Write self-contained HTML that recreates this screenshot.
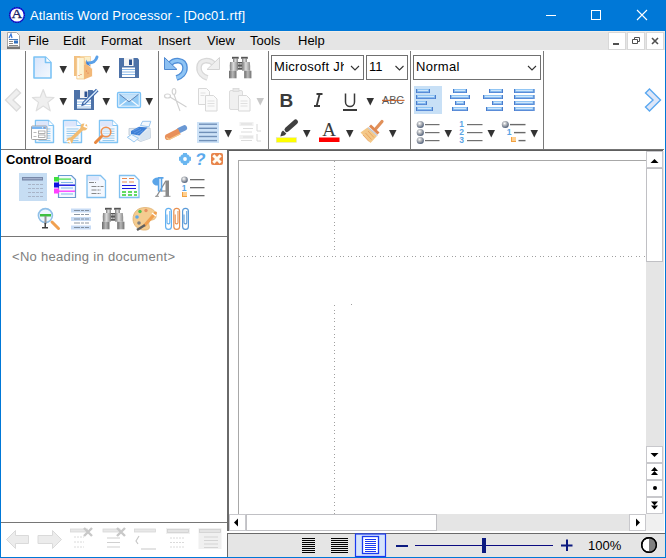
<!DOCTYPE html>
<html><head><meta charset="utf-8">
<style>
*{margin:0;padding:0;box-sizing:border-box}
html,body{width:666px;height:558px;overflow:hidden;background:#fff;font-family:"Liberation Sans",sans-serif}
.a{position:absolute}
.t{position:absolute;white-space:nowrap;line-height:1}
svg{position:absolute;left:0;top:0;overflow:visible}
</style></head><body>

<div class="a" style="left:0;top:0;width:666px;height:31px;background:#0078d7"></div>
<div class="a" style="left:1px;top:31px;width:664px;height:1px;background:#f1eee9"></div>
<div class="a" style="left:1px;top:32px;width:664px;height:18px;background:#e5e5e5"></div>
<div class="t" style="left:30px;top:9px;font-size:13px;color:#fff;letter-spacing:0.12px">Atlantis Word Processor - [Doc01.rtf]</div>
<div class="t" style="left:28px;top:34px;font-size:13px;color:#000">File</div>
<div class="t" style="left:63px;top:34px;font-size:13px;color:#000">Edit</div>
<div class="t" style="left:101px;top:34px;font-size:13px;color:#000">Format</div>
<div class="t" style="left:158px;top:34px;font-size:13px;color:#000">Insert</div>
<div class="t" style="left:207px;top:34px;font-size:13px;color:#000">View</div>
<div class="t" style="left:250px;top:34px;font-size:13px;color:#000">Tools</div>
<div class="t" style="left:298px;top:34px;font-size:13px;color:#000">Help</div>
<div class="a" style="left:608px;top:32px;width:18px;height:18px;background:#fff;border:1px solid #d8d8d8"></div>
<div class="a" style="left:627px;top:32px;width:18px;height:18px;background:#fff;border:1px solid #d8d8d8"></div>
<div class="a" style="left:646px;top:32px;width:18px;height:18px;background:#fff;border:1px solid #d8d8d8"></div>
<!-- combos -->
<div class="a" style="left:271px;top:55px;width:93px;height:25px;border:1px solid #707070;background:#fff"></div>
<div class="a" style="left:366px;top:55px;width:42px;height:25px;border:1px solid #707070;background:#fff"></div>
<div class="a" style="left:413px;top:55px;width:128px;height:25px;border:1px solid #707070;background:#fff"></div>
<div class="a" style="left:274px;top:58px;width:70px;height:16px;overflow:hidden"><div class="t" style="left:0;top:2px;font-size:13px;color:#000;letter-spacing:0.3px">Microsoft JhengHei</div></div>
<div class="t" style="left:369px;top:60px;font-size:13px;color:#000">11</div>
<div class="t" style="left:416px;top:60px;font-size:13px;color:#000;letter-spacing:0.3px">Normal</div>
<!-- control board text -->
<div class="t" style="left:6px;top:153px;font-size:13px;font-weight:bold;color:#000;letter-spacing:-0.15px">Control Board</div>
<div class="t" style="left:12px;top:250px;font-size:13px;color:#808080;letter-spacing:0.3px">&lt;No heading in document&gt;</div>
<!-- doc/scrollbars/status -->
<div class="a" style="left:646px;top:151px;width:18px;height:363px;background:#e5e5e5"></div>
<div class="a" style="left:229px;top:514px;width:435px;height:17px;background:#e5e5e5"></div>
<div class="a" style="left:646px;top:514px;width:18px;height:17px;background:#f0f0f0"></div>
<div class="a" style="left:227px;top:533px;width:438px;height:24px;background:#e5e5e5"></div>
<div class="t" style="left:588px;top:539px;font-size:13px;color:#000">100%</div>
<svg width="666" height="558" viewBox="0 0 666 558">
<defs>
<linearGradient id="gdoc" x1="0" y1="0" x2="1" y2="1"><stop offset="0" stop-color="#d6e4fb"/><stop offset="1" stop-color="#f4f9fe"/></linearGradient>
<radialGradient id="gball" cx="0.4" cy="0.35" r="0.65"><stop offset="0" stop-color="#ffffff"/><stop offset="0.5" stop-color="#a8acb2"/><stop offset="1" stop-color="#50607a"/></radialGradient>
<linearGradient id="gbin" x1="0" y1="0" x2="1" y2="0"><stop offset="0" stop-color="#7a7a7a"/><stop offset="0.45" stop-color="#dcdcdc"/><stop offset="1" stop-color="#8a8a8a"/></linearGradient><linearGradient id="gbin2" x1="0" y1="0" x2="1" y2="0"><stop offset="0" stop-color="#6a6a6a"/><stop offset="0.5" stop-color="#b8b8b8"/><stop offset="1" stop-color="#707070"/></linearGradient>
</defs>
<rect x="0" y="0" width="1" height="558" fill="#0078d7"/><rect x="665" y="0" width="1" height="558" fill="#0078d7"/><rect x="0" y="557" width="666" height="1" fill="#0078d7"/>
<circle cx="17" cy="15" r="7.3" fill="#fff" stroke="#1818e0" stroke-width="1.4"/><circle cx="17" cy="15" r="7.6" fill="none" stroke="#101060" stroke-width="0.8" stroke-dasharray="1 1.5"/>
<text x="17" y="18.2" text-anchor="middle" font-family="Liberation Serif" font-size="13" fill="#1c2466" stroke="#1c2466" stroke-width="0.3" transform="translate(17 15) scale(1.15 1) translate(-17 -15)">A</text>
<rect x="546" y="15" width="10" height="1" fill="#fff"/>
<rect x="591.5" y="10.5" width="9" height="9" fill="none" stroke="#fff" stroke-width="1"/>
<path d="M637 10 L647 20 M647 10 L637 20" stroke="#fff" stroke-width="1.1"/>
<path d="M7.5 32.5 h9 l3 3 v13 h-12 z" fill="#fff" stroke="#a8a8a8" stroke-width="1"/>
<rect x="7" y="46.5" width="13" height="2.5" fill="#777"/>
<path d="M9 38 l2 -4 l1 4" stroke="#3a78d8" stroke-width="1.2" fill="none"/>
<rect x="9" y="39" width="9" height="1" fill="#4a7ab8"/><rect x="9" y="41" width="4" height="1" fill="#888"/><rect x="14" y="40.5" width="4" height="3" fill="#3070c0"/><rect x="9" y="43" width="4" height="1" fill="#888"/><rect x="9" y="45" width="9" height="1" fill="#888"/>
<rect x="613" y="43" width="6" height="2" fill="#505050"/>
<path d="M632.5 39.5h5v4h-5z M634.5 39.5v-2h5v4h-2" fill="none" stroke="#505050" stroke-width="1"/>
<path d="M652 38 L658 44 M658 38 L652 44" stroke="#505050" stroke-width="1.6"/>
<rect x="25" y="51" width="1" height="98" fill="#7a7a7a"/>
<rect x="158" y="51" width="1" height="98" fill="#7a7a7a"/>
<rect x="268" y="51" width="1" height="98" fill="#7a7a7a"/>
<rect x="410" y="51" width="1" height="98" fill="#7a7a7a"/>
<rect x="543" y="51" width="1" height="98" fill="#7a7a7a"/>
<rect x="1" y="149" width="663" height="1" fill="#747474"/>
<path d="M16.5 89 L5.5 100 L16.5 111 L20.5 107 L13 100 L20.5 93 Z" fill="#efefef" stroke="#dcdcdc" stroke-width="1.4" stroke-linejoin="miter"/>
<path d="M649.5 89 L660.5 100 L649.5 111 L645.5 107 L653 100 L645.5 93 Z" fill="#dde6f8" stroke="#5aa8f0" stroke-width="1.4"/>
<path d="M34 57 h11.5 l5.5 5.5 v15.5 h-17 z" fill="url(#gdoc)" stroke="#7cc3f5" stroke-width="1.6" stroke-linejoin="round"/>
<path d="M45.5 57 v5.5 h5.5" fill="#fff" stroke="#7cc3f5" stroke-width="1.6" stroke-linejoin="round"/>
<path d="M59.5 66 h7.5 l-3.75 7.5 z" fill="#333"/>
<path d="M74 56 h16.6 v20 h-16.6 z" fill="#f2c080"/>
<path d="M80 56.5 h10 v9 z" fill="#fbeec8"/>
<path d="M76.8 57.5 h7.5 v21.5 h-7.5 z" fill="#fdf2d0" stroke="#f4c88c" stroke-width="0.8"/>
<path d="M77.5 58 h1.2 v20 h-1.2z" fill="#fff"/>
<path d="M84 65 L88.6 65 L92.6 69 L92.6 76 L84 79.5 Z" fill="#f2b878"/>
<path d="M88.6 65 L92.6 69 L92.6 76" fill="none" stroke="#fff" stroke-width="0.9"/>
<circle cx="86.5" cy="71" r="0.6" fill="#e07048"/><circle cx="88" cy="73" r="0.6" fill="#e07048"/><circle cx="79" cy="75.5" r="0.6" fill="#e07048"/><circle cx="81" cy="74.5" r="0.6" fill="#e07048"/>
<path d="M97 57 C96 61 93 63 88 63" fill="none" stroke="#5aa0e8" stroke-width="3" stroke-linecap="round"/>
<path d="M86 59.5 L86.5 64 L90.6 66.5 Z" fill="#3a80d8"/>
<path d="M102.5 66 h7.5 l-3.75 7.5 z" fill="#333"/>
<path d="M119 58 h18.5 l1.5 1.5 v18.5 h-20 z" fill="#4d72a8"/>
<rect x="124" y="58" width="9.5" height="8" fill="#f4f4f4"/><rect x="129" y="59.5" width="3" height="5.5" fill="#2d5290"/>
<rect x="122" y="67.5" width="13" height="9.5" fill="#fff"/>
<rect x="122" y="69" width="13" height="1" fill="#8ab8e8"/><rect x="122" y="71.5" width="13" height="1" fill="#8ab8e8"/><rect x="122" y="74" width="13" height="1" fill="#8ab8e8"/>
<path d="M43.2 89.5 L46.2 97.2 L54 97.5 L47.9 102.4 L50.2 110.8 L43.2 106 L36.2 110.8 L38.5 102.4 L32.4 97.5 L40.2 97.2 Z" fill="#efefef" stroke="#dedede" stroke-width="1.2" stroke-linejoin="round"/>
<path d="M59.5 98 h7.5 l-3.75 7.5 z" fill="#333"/>
<path d="M74 90 h18.5 l1.5 1.5 v18.5 h-20 z" fill="#4d72a8"/>
<rect x="80" y="90" width="8" height="8" fill="#f4f4f4"/><rect x="84.5" y="91.5" width="2.8" height="5.5" fill="#2d5290"/>
<rect x="77" y="99.5" width="14" height="9" fill="#fff"/><rect x="77" y="101.5" width="14" height="1" fill="#9cc4ec"/><rect x="77" y="104" width="14" height="1" fill="#9cc4ec"/><rect x="77" y="106.5" width="14" height="1" fill="#9cc4ec"/>
<path d="M97.3 90 L83.5 103.8" stroke="#3a64a8" stroke-width="3.6"/><path d="M97.3 90 L83.5 103.8" stroke="#d4e8fa" stroke-width="1.5"/>
<path d="M82.2 102.5 l2.6 2.6 l-3.6 1.2 z" fill="#3a5fa0"/>
<path d="M102.5 98 h7.5 l-3.75 7.5 z" fill="#333"/>
<rect x="117.5" y="92.5" width="23" height="15" rx="1.2" fill="#92cbf6" stroke="#7cc2f6" stroke-width="1.3"/>
<rect x="118.8" y="93.8" width="20.4" height="12.4" fill="none" stroke="#f0f8ff" stroke-width="0.9"/>
<path d="M120 94.5 L129 101.5 L138 94.5 Z" fill="#c4e2fa"/>
<path d="M119.5 106 L128 99.5 M138.5 106 L130 99.5" stroke="#f4faff" stroke-width="1.2"/>
<path d="M119.5 94.3 L129 101.8 L138.5 94.3" fill="none" stroke="#5a78a8" stroke-width="0.9"/>
<path d="M145.5 98 h7.5 l-3.75 7.5 z" fill="#333"/>
<path d="M35.5 120.5 h13 l5 5 v17 h-18 z" fill="#f5f9fe" stroke="#80c4f4" stroke-width="1.4" stroke-linejoin="round"/>
<path d="M48.5 120.5 v5 h5" fill="#fff" stroke="#80c4f4" stroke-width="1.2"/>
<rect x="36.5" y="121.5" width="12" height="5" fill="#dde6fb"/>
<rect x="38.5" y="128.5" width="12" height="0.9" fill="#8cc4ec"/>
<rect x="38.5" y="130.8" width="12" height="0.9" fill="#8cc4ec"/>
<rect x="38.5" y="133.1" width="12" height="0.9" fill="#8cc4ec"/>
<rect x="38.5" y="135.4" width="12" height="0.9" fill="#8cc4ec"/>
<rect x="38.5" y="137.7" width="12" height="0.9" fill="#8cc4ec"/>
<rect x="38.5" y="140.0" width="12" height="0.9" fill="#8cc4ec"/>
<rect x="31.5" y="126" width="15.5" height="13.5" rx="1" fill="#fff" stroke="#a4a4a4" stroke-width="1"/>
<rect x="32" y="126.5" width="14.5" height="2.5" fill="#7ab6f2"/><rect x="42" y="127.3" width="1" height="1" fill="#fff"/><rect x="44" y="127.3" width="1" height="1" fill="#e88050"/>
<rect x="38.5" y="131" width="6.5" height="2.5" fill="none" stroke="#a0a0a0" stroke-width="0.8"/><rect x="38.5" y="135" width="6.5" height="2.5" fill="none" stroke="#a0a0a0" stroke-width="0.8"/><rect x="33.5" y="132" width="3" height="0.8" fill="#aaa"/><rect x="33.5" y="136" width="3" height="0.8" fill="#aaa"/>
<path d="M63.5 120.5 h13 l5 5 v17 h-18 z" fill="#f5f9fe" stroke="#80c4f4" stroke-width="1.4" stroke-linejoin="round"/>
<path d="M76.5 120.5 v5 h5" fill="#fff" stroke="#80c4f4" stroke-width="1.2"/>
<rect x="64.5" y="121.5" width="12" height="5" fill="#dde6fb"/>
<rect x="66.5" y="128.5" width="12" height="0.9" fill="#8cc4ec"/>
<rect x="66.5" y="130.8" width="12" height="0.9" fill="#8cc4ec"/>
<rect x="66.5" y="133.1" width="12" height="0.9" fill="#8cc4ec"/>
<rect x="66.5" y="135.4" width="12" height="0.9" fill="#8cc4ec"/>
<rect x="66.5" y="137.7" width="12" height="0.9" fill="#8cc4ec"/>
<rect x="66.5" y="140.0" width="12" height="0.9" fill="#8cc4ec"/>
<path d="M71 139.5 L83 128" stroke="#f2bc72" stroke-width="3.2"/>
<circle cx="84" cy="127" r="3.4" fill="#f2bc72"/><path d="M85.5 123 L84.3 126.2 L87.5 127.5" stroke="#fff" stroke-width="1.6" fill="none"/>
<circle cx="70" cy="140.5" r="3" fill="#f2bc72"/><path d="M66.5 141.8 L69.6 140.8 L70.6 143.8" stroke="#fff" stroke-width="1.4" fill="none"/>
<path d="M99.5 120.5 h13 l5 5 v17 h-18 z" fill="#f5f9fe" stroke="#80c4f4" stroke-width="1.4" stroke-linejoin="round"/>
<path d="M112.5 120.5 v5 h5" fill="#fff" stroke="#80c4f4" stroke-width="1.2"/>
<rect x="100.5" y="121.5" width="12" height="5" fill="#dde6fb"/>
<rect x="102.5" y="128.5" width="12" height="0.9" fill="#8cc4ec"/>
<rect x="102.5" y="130.8" width="12" height="0.9" fill="#8cc4ec"/>
<rect x="102.5" y="133.1" width="12" height="0.9" fill="#8cc4ec"/>
<rect x="102.5" y="135.4" width="12" height="0.9" fill="#8cc4ec"/>
<rect x="102.5" y="137.7" width="12" height="0.9" fill="#8cc4ec"/>
<rect x="102.5" y="140.0" width="12" height="0.9" fill="#8cc4ec"/>
<path d="M101.5 136.5 L95.5 142.5" stroke="#e88840" stroke-width="3" stroke-linecap="round"/>
<circle cx="106" cy="132" r="4.8" fill="#e8f0fa" fill-opacity="0.6" stroke="#f09050" stroke-width="1.6"/>
<path d="M140.5 125.5 L142.6 121.3 L150.8 121.3 L149 126.8 Z" fill="#f4f8fd" stroke="#90c0ec" stroke-width="0.9"/>
<path d="M129 128.5 L150 128 L150.5 138 L140.5 141.5 L129 135 Z" fill="#e4ebf3" stroke="#b8c4d0" stroke-width="0.8"/>
<path d="M131 131 L139 126.8 L147.6 127.5 L139.5 135.5 L131 134 Z" fill="#3d7fd6"/>
<path d="M133 131 l6 -3 M134 133 l7 -3.5 M137 134.5 l6 -4" stroke="#6aa0e8" stroke-width="0.8"/>
<path d="M140 135.5 L150 128.5 L150.5 138 L140.5 141.5 Z" fill="#d8e4f0"/>
<path d="M127.3 137.3 L131.5 134.5 L138.5 138.3 L134 142 Z" fill="#f2f8ff" stroke="#90c4f0" stroke-width="0.9"/>
<path d="M170 64 C174 59.5 184.5 58.5 185 67.5 C185.3 73 181 76.5 176.5 78" fill="none" stroke="#4f8ed8" stroke-width="5.6"/>
<path d="M170 64 C174 59.5 184.5 58.5 185 67.5 C185.3 73 181 76.5 176.5 78" fill="none" stroke="#8ec4f4" stroke-width="3"/>
<path d="M164.5 57.5 L164.5 69.5 L177 69.5 Z" fill="#8cc0f2" stroke="#4f88d0" stroke-width="1"/>
<path d="M214 64 C210 59.5 199.5 58.5 199 67.5 C198.7 73 203 76.5 207.5 78" fill="none" stroke="#d8d8d8" stroke-width="5.6"/>
<path d="M214 64 C210 59.5 199.5 58.5 199 67.5 C198.7 73 203 76.5 207.5 78" fill="none" stroke="#ececec" stroke-width="3"/>
<path d="M219.5 57.5 L219.5 69.5 L207 69.5 Z" fill="#efefef" stroke="#d4d4d4" stroke-width="1"/>
<rect x="232.0" y="56.8" width="6.7" height="2" fill="#555"/>
<rect x="241.1" y="56.8" width="6.7" height="2" fill="#555"/>
<rect x="233.0" y="58.6" width="5" height="3.8" fill="url(#gbin)"/>
<rect x="242.0" y="58.6" width="5" height="3.8" fill="url(#gbin)"/>
<path transform="translate(127 -151)" d="M103 213 h7.8 v8.7 h-7.8 q-0.6 -4.3 0 -8.7z" fill="url(#gbin)"/>
<path transform="translate(127 -151)" d="M115.2 213 h7.6 q0.6 4.3 0.4 8.7 h-8 z" fill="url(#gbin)"/>
<path transform="translate(127 -151)" d="M102 221.7 h7.5 v7.6 h-7.5 z" fill="url(#gbin2)"/>
<path transform="translate(127 -151)" d="M117.2 221.7 h7.2 v7.6 h-7.2 z" fill="url(#gbin2)"/>
<rect x="237.6" y="62.0" width="4.6" height="7.7" fill="#585858"/>
<rect x="238.2" y="63.2" width="1.3" height="1.3" fill="#f4f4f4"/>
<rect x="240.3" y="63.2" width="1.3" height="1.3" fill="#f4f4f4"/>
<rect x="238.2" y="66.6" width="1.3" height="1.3" fill="#f4f4f4"/>
<rect x="240.3" y="66.6" width="1.3" height="1.3" fill="#f4f4f4"/>
<ellipse cx="174" cy="91.5" rx="1.8" ry="3" fill="none" stroke="#d4d4d4" stroke-width="1.2"/>
<ellipse cx="167.5" cy="96" rx="3" ry="2" fill="none" stroke="#d4d4d4" stroke-width="1.2"/>
<path d="M174 94.5 L180 111 M170 97 L186.5 107" stroke="#d0d0d0" stroke-width="1.1"/>
<path d="M198.5 88.5 h8 l3 3 v13 h-11 z" fill="#fafafa" stroke="#d8d8d8" stroke-width="1"/>
<path d="M205.5 95.5 h8 l3.5 3.5 v12 h-11.5 z" fill="#fafafa" stroke="#d8d8d8" stroke-width="1"/>
<path d="M207.5 101h7M207.5 103.5h7M207.5 106h7M200.5 93h5M200.5 95.5h4" stroke="#e0e0e0" stroke-width="1"/>
<rect x="229.5" y="90.5" width="13" height="19" rx="1.5" fill="#f0f0f0" stroke="#dcdcdc" stroke-width="1"/>
<rect x="233" y="88.5" width="6" height="3" fill="#e8e8e8" stroke="#d8d8d8" stroke-width="0.8"/>
<path d="M238.5 95.5 h8 l3.5 3.5 v12 h-11.5 z" fill="#fafafa" stroke="#d8d8d8" stroke-width="1"/>
<path d="M240.5 101h7M240.5 103.5h7M240.5 106h7" stroke="#e0e0e0" stroke-width="1"/>
<path d="M256.5 98 h7.5 l-3.75 7.5 z" fill="#c8c8c8"/>
<path d="M179.5 130.2 L184.3 128" stroke="#6a98d4" stroke-width="5.6" stroke-linecap="round"/>
<path d="M168 137 L179.3 131.4" stroke="#e8905a" stroke-width="6.2"/><circle cx="168" cy="137" r="3.1" fill="#e8905a"/>
<path d="M166.5 137.5 L169 139.5 L180 134" stroke="#f8c888" stroke-width="1.3" fill="none"/>
<rect x="197" y="122" width="22" height="21" fill="#cde2f7"/>
<rect x="199" y="123.5" width="18" height="1.4" fill="#7090b8"/>
<rect x="199" y="127.6" width="18" height="1.4" fill="#7090b8"/>
<rect x="199" y="131.7" width="18" height="1.4" fill="#7090b8"/>
<rect x="199" y="135.8" width="18" height="1.4" fill="#7090b8"/>
<rect x="199" y="139.9" width="18" height="1.4" fill="#7090b8"/>
<path d="M224.5 130 h7.5 l-3.75 7.5 z" fill="#333"/>
<rect x="239.5" y="122" width="14" height="4" fill="#f0f0f0"/><rect x="239.5" y="135" width="14" height="4" fill="#f0f0f0"/>
<path d="M241 124h11M243 128.5h10M241 132h11M243 137h10M241 140.5h11" stroke="#dcdcdc" stroke-width="1"/>
<path d="M257 124v7h4M257 134v7h4" fill="none" stroke="#d8d8d8" stroke-width="1"/>
<path d="M351 66 l4 4 l4 -4" fill="none" stroke="#333" stroke-width="1.1"/>
<path d="M395.5 66 l4 4 l4 -4" fill="none" stroke="#333" stroke-width="1.1"/>
<path d="M528 66 l4 4 l4 -4" fill="none" stroke="#333" stroke-width="1.1"/>
<text x="279.5" y="107" font-family="Liberation Sans" font-weight="bold" font-size="19" fill="#3a3a3a">B</text>
<path d="M316.5 94 h6 M314 106 h6 M319.6 94 L316.6 106" stroke="#3a3a3a" stroke-width="1.8" fill="none"/>
<path d="M345.5 93.5 v8.5 a4.5 4.5 0 0 0 9 0 v-8.5" fill="none" stroke="#3a3a3a" stroke-width="1.5"/>
<rect x="343" y="109" width="14" height="2" fill="#3a3a3a"/>
<path d="M366.5 98 h7.5 l-3.75 7.5 z" fill="#333"/>
<text x="382" y="104" font-family="Liberation Sans" font-size="10.5" fill="#555" textLength="22" lengthAdjust="spacingAndGlyphs">ABC</text>
<rect x="382" y="99.8" width="22.5" height="1.1" fill="#c86028"/>
<path d="M287 129.5 L295.5 122" stroke="#404040" stroke-width="5" stroke-linecap="round"/>
<path d="M280.3 136.5 L281.5 132 L283 130.5 L286.3 133.6 L284.8 135.2 Z" fill="#404040"/>
<rect x="276.2" y="137.6" width="20.3" height="4.8" fill="#ffff00" stroke="#dcdcdc" stroke-width="0.5"/>
<path d="M303 130 h7.5 l-3.75 7.5 z" fill="#333"/>
<text x="329" y="136" text-anchor="middle" font-family="Liberation Serif" font-size="19" fill="#3a3a3a">A</text>
<rect x="319" y="137.5" width="20.5" height="4.5" fill="#ff0000"/>
<path d="M346 130 h7.5 l-3.75 7.5 z" fill="#333"/>
<path d="M382 121.5 L376 128.5" stroke="#e0905a" stroke-width="3.2" stroke-linecap="round"/>
<path d="M360.5 132.5 L367.5 127.5 L377 136 L370.5 143 Z" fill="#f4c888"/>
<path d="M363 135 l6 6.5 M365.5 133 l6 6.5 M368 131 l6 6.5" stroke="#e8a060" stroke-width="0.9"/>
<path d="M368 127.5 L377.5 135.5" stroke="#c0c8d8" stroke-width="1.4"/>
<path d="M370 125.5 L378.5 133.5" stroke="#e08850" stroke-width="3"/>
<path d="M389 130 h7.5 l-3.75 7.5 z" fill="#333"/>
<rect x="414" y="86" width="28" height="28" fill="#c8e0f6"/>
<rect x="416" y="89" width="14" height="4" fill="#92c6f4"/>
<rect x="416" y="89" width="1.1" height="4" fill="#4a7ccc"/><rect x="428.9" y="89" width="1.1" height="4" fill="#4a7ccc"/>
<rect x="417.1" y="91.8" width="11.8" height="1.2" fill="#5a8cd8"/>
<rect x="418" y="90" width="10" height="1" fill="#cfe6fc"/>
<rect x="416" y="95" width="20" height="4" fill="#92c6f4"/>
<rect x="416" y="95" width="1.1" height="4" fill="#4a7ccc"/><rect x="434.9" y="95" width="1.1" height="4" fill="#4a7ccc"/>
<rect x="417.1" y="97.8" width="17.8" height="1.2" fill="#5a8cd8"/>
<rect x="418" y="96" width="16" height="1" fill="#cfe6fc"/>
<rect x="416" y="101" width="11" height="4" fill="#92c6f4"/>
<rect x="416" y="101" width="1.1" height="4" fill="#4a7ccc"/><rect x="425.9" y="101" width="1.1" height="4" fill="#4a7ccc"/>
<rect x="417.1" y="103.8" width="8.8" height="1.2" fill="#5a8cd8"/>
<rect x="418" y="102" width="7" height="1" fill="#cfe6fc"/>
<rect x="416" y="107" width="17" height="4" fill="#92c6f4"/>
<rect x="416" y="107" width="1.1" height="4" fill="#4a7ccc"/><rect x="431.9" y="107" width="1.1" height="4" fill="#4a7ccc"/>
<rect x="417.1" y="109.8" width="14.8" height="1.2" fill="#5a8cd8"/>
<rect x="418" y="108" width="13" height="1" fill="#cfe6fc"/>
<rect x="453" y="89" width="14" height="4" fill="#92c6f4"/>
<rect x="453" y="89" width="1.1" height="4" fill="#4a7ccc"/><rect x="465.9" y="89" width="1.1" height="4" fill="#4a7ccc"/>
<rect x="454.1" y="91.8" width="11.8" height="1.2" fill="#5a8cd8"/>
<rect x="455" y="90" width="10" height="1" fill="#cfe6fc"/>
<rect x="450" y="95" width="20" height="4" fill="#92c6f4"/>
<rect x="450" y="95" width="1.1" height="4" fill="#4a7ccc"/><rect x="468.9" y="95" width="1.1" height="4" fill="#4a7ccc"/>
<rect x="451.1" y="97.8" width="17.8" height="1.2" fill="#5a8cd8"/>
<rect x="452" y="96" width="16" height="1" fill="#cfe6fc"/>
<rect x="455" y="101" width="10" height="4" fill="#92c6f4"/>
<rect x="455" y="101" width="1.1" height="4" fill="#4a7ccc"/><rect x="463.9" y="101" width="1.1" height="4" fill="#4a7ccc"/>
<rect x="456.1" y="103.8" width="7.8" height="1.2" fill="#5a8cd8"/>
<rect x="457" y="102" width="6" height="1" fill="#cfe6fc"/>
<rect x="452" y="107" width="16" height="4" fill="#92c6f4"/>
<rect x="452" y="107" width="1.1" height="4" fill="#4a7ccc"/><rect x="466.9" y="107" width="1.1" height="4" fill="#4a7ccc"/>
<rect x="453.1" y="109.8" width="13.8" height="1.2" fill="#5a8cd8"/>
<rect x="454" y="108" width="12" height="1" fill="#cfe6fc"/>
<rect x="489" y="89" width="14" height="4" fill="#92c6f4"/>
<rect x="489" y="89" width="1.1" height="4" fill="#4a7ccc"/><rect x="501.9" y="89" width="1.1" height="4" fill="#4a7ccc"/>
<rect x="490.1" y="91.8" width="11.8" height="1.2" fill="#5a8cd8"/>
<rect x="491" y="90" width="10" height="1" fill="#cfe6fc"/>
<rect x="483" y="95" width="20" height="4" fill="#92c6f4"/>
<rect x="483" y="95" width="1.1" height="4" fill="#4a7ccc"/><rect x="501.9" y="95" width="1.1" height="4" fill="#4a7ccc"/>
<rect x="484.1" y="97.8" width="17.8" height="1.2" fill="#5a8cd8"/>
<rect x="485" y="96" width="16" height="1" fill="#cfe6fc"/>
<rect x="492" y="101" width="11" height="4" fill="#92c6f4"/>
<rect x="492" y="101" width="1.1" height="4" fill="#4a7ccc"/><rect x="501.9" y="101" width="1.1" height="4" fill="#4a7ccc"/>
<rect x="493.1" y="103.8" width="8.8" height="1.2" fill="#5a8cd8"/>
<rect x="494" y="102" width="7" height="1" fill="#cfe6fc"/>
<rect x="486" y="107" width="17" height="4" fill="#92c6f4"/>
<rect x="486" y="107" width="1.1" height="4" fill="#4a7ccc"/><rect x="501.9" y="107" width="1.1" height="4" fill="#4a7ccc"/>
<rect x="487.1" y="109.8" width="14.8" height="1.2" fill="#5a8cd8"/>
<rect x="488" y="108" width="13" height="1" fill="#cfe6fc"/>
<rect x="514" y="89" width="20.5" height="4" fill="#92c6f4"/>
<rect x="514" y="89" width="1.1" height="4" fill="#4a7ccc"/><rect x="533.4" y="89" width="1.1" height="4" fill="#4a7ccc"/>
<rect x="515.1" y="91.8" width="18.3" height="1.2" fill="#5a8cd8"/>
<rect x="516" y="90" width="16.5" height="1" fill="#cfe6fc"/>
<rect x="514" y="95" width="20.5" height="4" fill="#92c6f4"/>
<rect x="514" y="95" width="1.1" height="4" fill="#4a7ccc"/><rect x="533.4" y="95" width="1.1" height="4" fill="#4a7ccc"/>
<rect x="515.1" y="97.8" width="18.3" height="1.2" fill="#5a8cd8"/>
<rect x="516" y="96" width="16.5" height="1" fill="#cfe6fc"/>
<rect x="514" y="101" width="20.5" height="4" fill="#92c6f4"/>
<rect x="514" y="101" width="1.1" height="4" fill="#4a7ccc"/><rect x="533.4" y="101" width="1.1" height="4" fill="#4a7ccc"/>
<rect x="515.1" y="103.8" width="18.3" height="1.2" fill="#5a8cd8"/>
<rect x="516" y="102" width="16.5" height="1" fill="#cfe6fc"/>
<rect x="514" y="107" width="20.5" height="4" fill="#92c6f4"/>
<rect x="514" y="107" width="1.1" height="4" fill="#4a7ccc"/><rect x="533.4" y="107" width="1.1" height="4" fill="#4a7ccc"/>
<rect x="515.1" y="109.8" width="18.3" height="1.2" fill="#5a8cd8"/>
<rect x="516" y="108" width="16.5" height="1" fill="#cfe6fc"/>
<circle cx="420.3" cy="124.5" r="3.6" fill="url(#gball)"/>
<rect x="425" y="124.0" width="14.5" height="1.2" fill="#707070"/>
<circle cx="420.3" cy="132.5" r="3.6" fill="url(#gball)"/>
<rect x="425" y="132.0" width="14.5" height="1.2" fill="#707070"/>
<circle cx="420.3" cy="140.5" r="3.6" fill="url(#gball)"/>
<rect x="425" y="140.0" width="14.5" height="1.2" fill="#707070"/>
<path d="M444.5 130 h7.5 l-3.75 7.5 z" fill="#333"/>
<text x="459.3" y="127.2" font-family="Liberation Sans" font-size="8.5" font-weight="bold" fill="#5aa4e4">1</text>
<rect x="467" y="124" width="15.5" height="1.2" fill="#707070"/>
<text x="459.3" y="135.2" font-family="Liberation Sans" font-size="8.5" font-weight="bold" fill="#5aa4e4">2</text>
<rect x="467" y="132" width="15.5" height="1.2" fill="#707070"/>
<text x="459.3" y="143.2" font-family="Liberation Sans" font-size="8.5" font-weight="bold" fill="#5aa4e4">3</text>
<rect x="467" y="140" width="15.5" height="1.2" fill="#707070"/>
<path d="M487.5 130 h7.5 l-3.75 7.5 z" fill="#333"/>
<circle cx="505.3" cy="124.5" r="3.5" fill="url(#gball)"/>
<rect x="510" y="123.9" width="15.5" height="1.4" fill="#6a6a6a"/>
<text x="506.8" y="135.2" font-family="Liberation Sans" font-size="8.5" font-weight="bold" fill="#5aa4e4">1</text>
<rect x="514" y="131.9" width="11.5" height="1.4" fill="#6a6a6a"/>
<rect x="511" y="137" width="5" height="5" fill="#f0a040"/><rect x="512" y="137" width="4" height="4" fill="#ffd090"/>
<rect x="518.5" y="139.9" width="7" height="1.4" fill="#6a6a6a"/>
<path d="M530.5 130 h7.5 l-3.75 7.5 z" fill="#333"/>
<g fill="#6ab6f0"><rect x="183" y="153" width="4" height="12"/><rect x="179" y="156.8" width="12" height="4"/><circle cx="185" cy="159" r="4.6"/><rect x="183.5" y="153.7" width="3" height="10.6" transform="rotate(45 185 159)"/><rect x="183.5" y="153.7" width="3" height="10.6" transform="rotate(-45 185 159)"/></g><circle cx="185" cy="159" r="1.9" fill="#fff"/>
<text x="200" y="165.5" text-anchor="middle" font-family="Liberation Sans" font-weight="bold" font-size="17" fill="#5aa8ec" transform="skewX(-8) translate(23 0)">?</text>
<rect x="211" y="153" width="12" height="12" rx="2" fill="#e8844a"/>
<path d="M213.3 155.3 L220.7 162.7 M220.7 155.3 L213.3 162.7" stroke="#fffdf4" stroke-width="3"/>
<rect x="19" y="173" width="28" height="28" fill="#c6ddf3"/>
<rect x="22" y="177" width="21" height="3.5" fill="#7888a8"/><rect x="23" y="178.2" width="19" height="1" fill="#b0bcd8"/>
<path d="M28 184.5h15" stroke="#a8b4c8" stroke-width="1" stroke-dasharray="3 1"/>
<path d="M28 188.5h15" stroke="#a8b4c8" stroke-width="1" stroke-dasharray="3 1"/>
<path d="M28 192.5h15" stroke="#a8b4c8" stroke-width="1" stroke-dasharray="3 1"/>
<path d="M28 196.5h15" stroke="#a8b4c8" stroke-width="1" stroke-dasharray="3 1"/>
<path d="M58.5 175.5 h13 l4 4 v18 h-17 z" fill="#f4f8fe" stroke="#6a9ad0" stroke-width="1.2"/>
<rect x="54" y="177" width="5" height="4.5" fill="#40e040"/><rect x="58" y="178.5" width="13" height="1.2" fill="#40e040"/>
<rect x="54" y="182.5" width="5" height="5" fill="#1010e0"/><rect x="58" y="184.5" width="17" height="1.4" fill="#1010e0"/>
<rect x="54" y="188.5" width="5" height="5" fill="#ff40ff"/><rect x="58" y="190.5" width="17" height="1.4" fill="#ff40ff"/>
<rect x="61" y="182" width="12" height="1" fill="#80b8e8"/><rect x="61" y="187.5" width="12" height="1" fill="#80b8e8"/><rect x="61" y="193.5" width="12" height="1" fill="#80b8e8"/>
<path d="M87 175.5 h13.5 l5 5 v17 h-18.5 z" fill="#f4f8fe" stroke="#80c0f0" stroke-width="1.3"/>
<rect x="88" y="176.5" width="11" height="4" fill="#dde6fb"/>
<path d="M89 182.5h7M91.5 186.5h12M91.5 190h9.5M91.5 193.5h9.5" stroke="#7a7a7a" stroke-width="0.9" stroke-dasharray="5 1 2 1"/>
<path d="M119.5 175.5 h15 l4.5 4.5 v17.5 h-19.5 z" fill="#fafcff" stroke="#80c0f0" stroke-width="1.3"/>
<path d="M122 178.5h5M129 178.5h5M122 182h5M129 182h5" stroke="#e88850" stroke-width="1"/>
<path d="M122 185.5h14M122 188.5h14" stroke="#1818e0" stroke-width="1.2"/>
<path d="M122 192h4M128 192h4M134 192h3M122 195h4M128 195h4M134 195h3" stroke="#30d030" stroke-width="1.3"/>
<path d="M165.5 180.5 h3.5 v16 h-3.5 z" fill="#8a8a8a"/>
<path d="M165.8 181 L156.5 196.5" stroke="#8a8a8a" stroke-width="1.3"/>
<path d="M160 191 h6" stroke="#9a9a9a" stroke-width="1.2"/><path d="M155 196.3 h4 M163.5 196.3 h7" stroke="#8a8a8a" stroke-width="0.9"/>
<path d="M158 177 h5.5 v1.8 h-1.2 v12.8 h-1.6 v-12.8 h-1.3 v12.8 h-1.6 v-6 a5.5 4 0 0 1 0 -8 z" fill="#5aa4e8"/>
<circle cx="184.5" cy="179.8" r="3.3" fill="url(#gball)"/>
<rect x="190" y="179" width="14.5" height="1.3" fill="#6a6a6a"/>
<text x="181.8" y="191.2" font-family="Liberation Sans" font-size="8.5" font-weight="bold" fill="#5aa4e4">1</text>
<rect x="190" y="187" width="14.5" height="1.3" fill="#6a6a6a"/>
<rect x="182" y="192" width="5" height="5" fill="#f0a040"/><rect x="183" y="192" width="4" height="4" fill="#ffd090"/>
<rect x="190" y="195" width="14.5" height="1.3" fill="#6a6a6a"/>
<path d="M52 222 L58.5 228.5" stroke="#f0a050" stroke-width="3" stroke-linecap="round"/>
<circle cx="45.4" cy="215.6" r="7" fill="#eef6fd" stroke="#90c0e8" stroke-width="1.6"/>
<rect x="40" y="214" width="11" height="2.5" fill="#40c040"/><rect x="44.5" y="216" width="2" height="8" fill="#909090"/><rect x="42" y="227" width="6" height="1.5" fill="#404040"/><rect x="44.5" y="223" width="1.5" height="4.5" fill="#404040"/>
<rect x="71" y="208.5" width="20" height="4" fill="#c8dcf5"/><rect x="71" y="217" width="20" height="4" fill="#c8dcf5"/><rect x="71" y="225.5" width="20" height="4" fill="#c8dcf5"/>
<path d="M74 210.5h15M74 214.5h15M74 219h15M74 223h15M74 227.5h15" stroke="#707c8c" stroke-width="0.8" stroke-dasharray="6 1 3 1"/>
<rect x="105.0" y="207.8" width="6.7" height="2" fill="#555"/>
<rect x="114.1" y="207.8" width="6.7" height="2" fill="#555"/>
<rect x="106.0" y="209.6" width="5" height="3.8" fill="url(#gbin)"/>
<rect x="115.0" y="209.6" width="5" height="3.8" fill="url(#gbin)"/>
<path transform="translate(0 0)" d="M103 213 h7.8 v8.7 h-7.8 q-0.6 -4.3 0 -8.7z" fill="url(#gbin)"/>
<path transform="translate(0 0)" d="M115.2 213 h7.6 q0.6 4.3 0.4 8.7 h-8 z" fill="url(#gbin)"/>
<path transform="translate(0 0)" d="M102 221.7 h7.5 v7.6 h-7.5 z" fill="url(#gbin2)"/>
<path transform="translate(0 0)" d="M117.2 221.7 h7.2 v7.6 h-7.2 z" fill="url(#gbin2)"/>
<rect x="110.6" y="213.0" width="4.6" height="7.7" fill="#585858"/>
<rect x="111.2" y="214.2" width="1.3" height="1.3" fill="#f4f4f4"/>
<rect x="113.3" y="214.2" width="1.3" height="1.3" fill="#f4f4f4"/>
<rect x="111.2" y="217.6" width="1.3" height="1.3" fill="#f4f4f4"/>
<rect x="113.3" y="217.6" width="1.3" height="1.3" fill="#f4f4f4"/>
<path d="M145 207.5 C153 207.5 157 212 156 217 C155 221 150 219 149 222 C148 226 152 229 146 230 C138 231 133 225 133 219 C133 212 138 207.5 145 207.5 Z" fill="#f4cc90" stroke="#e0b070" stroke-width="0.8"/>
<circle cx="140" cy="211.5" r="1.7" fill="#50c050"/><circle cx="146" cy="210.5" r="1.7" fill="#e89060"/><circle cx="137" cy="217" r="1.8" fill="#60a8e8"/><circle cx="139" cy="223" r="1.8" fill="#808080"/>
<path d="M155.5 213 L145 225" stroke="#f0a050" stroke-width="3" stroke-linecap="round"/><path d="M145 225 L137 230" stroke="#606060" stroke-width="2.5"/>
<path d="M152 213 L156 216" stroke="#fff" stroke-width="1.5"/>
<rect x="165.6" y="208.3" width="5.8" height="21" rx="2.9" fill="none" stroke="#62b0f0" stroke-width="1.2"/>
<path d="M169.8 211 v11.5 a1.4 1.4 0 0 1 -2.8 0 v-8" fill="none" stroke="#62b0f0" stroke-width="1.1"/>
<rect x="173.79999999999998" y="208.3" width="5.8" height="21" rx="2.9" fill="none" stroke="#e89050" stroke-width="1.2"/>
<path d="M178.0 211 v11.5 a1.4 1.4 0 0 1 -2.8 0 v-8" fill="none" stroke="#e89050" stroke-width="1.1"/>
<rect x="182.6" y="208.3" width="5.8" height="21" rx="2.9" fill="none" stroke="#5a9ad8" stroke-width="1.2"/>
<path d="M186.8 211 v11.5 a1.4 1.4 0 0 1 -2.8 0 v-8" fill="none" stroke="#5a9ad8" stroke-width="1.1"/>
<rect x="1" y="236" width="226" height="1" fill="#767676"/>
<rect x="1" y="522" width="226" height="1" fill="#767676"/>
<rect x="227" y="150" width="2" height="381" fill="#6a6a6a"/>
<path d="M6.5 539.5 L15.5 530.5 V535.5 H28.5 V543.5 H15.5 V548.5 Z" fill="#ececec" stroke="#dadada" stroke-width="1"/>
<path d="M61.5 539.5 L52.5 530.5 V535.5 H38 V543.5 H52.5 V548.5 Z" fill="#ececec" stroke="#dadada" stroke-width="1"/>
<rect x="70.5" y="529" width="17" height="3" fill="#e8e8e8" stroke="#d8d8d8" stroke-width="0.8"/>
<path d="M84 528 L92 536 M92 528 L84 536" stroke="#c8c8c8" stroke-width="2.4"/>
<path d="M74 537h10M74 542h10M74 547h10" stroke="#dadada" stroke-width="1" stroke-dasharray="2 1"/>
<rect x="103" y="529" width="17" height="3" fill="#e8e8e8" stroke="#d8d8d8" stroke-width="0.8"/>
<path d="M117 528 L125 536 M125 528 L117 536" stroke="#c8c8c8" stroke-width="2.4"/>
<path d="M107 538h13M107 542.5h13M107 547h13" stroke="#d0d0d0" stroke-width="1.2"/>
<rect x="134.5" y="529" width="21" height="3" fill="#e8e8e8" stroke="#d8d8d8" stroke-width="0.8"/>
<path d="M139 536 l-3 5 l2 3 M141 549 h15" fill="none" stroke="#c8c8c8" stroke-width="1.2"/>
<rect x="166" y="528" width="24" height="6" fill="#f0f0f0"/><rect x="167.5" y="529.5" width="21" height="3" fill="#e4e4e4" stroke="#d0d0d0" stroke-width="0.8"/>
<path d="M170 538h15M170 542.5h15M170 547h15" stroke="#dadada" stroke-width="1" stroke-dasharray="2 1"/>
<rect x="198.5" y="528" width="23" height="21" fill="#f0f0f0"/><rect x="199.5" y="529.5" width="21" height="3" fill="#e4e4e4" stroke="#d0d0d0" stroke-width="0.8"/>
<path d="M204 537h14M204 540.5h14M204 544h14M204 547.5h14" stroke="#d4d4d4" stroke-width="1"/>
<rect x="229" y="150" width="434" height="1" fill="#5e5e5e"/>
<rect x="238" y="160" width="408" height="1" fill="#a8a8a8"/>
<rect x="238" y="160" width="1" height="354" fill="#a8a8a8"/>
<path d="M334.5 161 V251" stroke="#a0a0a0" stroke-width="1" stroke-dasharray="1 4 1 2"/>
<path d="M334.5 305 V514" stroke="#a0a0a0" stroke-width="1" stroke-dasharray="1 4 1 2"/>
<path d="M239 256.5 H645" stroke="#a0a0a0" stroke-width="1" stroke-dasharray="1 4 1 2"/>
<rect x="351" y="304" width="1" height="1" fill="#a0a0a0"/>
<rect x="646.5" y="151.5" width="16" height="16" fill="#fff" stroke="#c8c8cc" stroke-width="1"/>
<path d="M650.5 163 L654.5 159 L658.5 163 z" fill="#000"/>
<rect x="646.5" y="168.5" width="16" height="93" fill="#fff" stroke="#c0c0c4" stroke-width="1"/>
<rect x="646.5" y="446.5" width="16" height="16" fill="#fff" stroke="#c8c8cc" stroke-width="1"/>
<path d="M650.5 453 L658.5 453 L654.5 457 z" fill="#000"/>
<rect x="646.5" y="463.5" width="16" height="16" fill="#fff" stroke="#c8c8cc" stroke-width="1"/>
<path d="M651 471 L654.5 467 L658 471 z M651 475 L654.5 471 L658 475 z" fill="#000"/>
<rect x="646.5" y="480.5" width="16" height="16" fill="#fff" stroke="#c8c8cc" stroke-width="1"/>
<circle cx="655" cy="488" r="2" fill="#000"/>
<rect x="646.5" y="497.5" width="16" height="16" fill="#fff" stroke="#c8c8cc" stroke-width="1"/>
<path d="M651 501.5 L658 501.5 L654.5 505.5 z M651 505.5 L658 505.5 L654.5 509.5 z" fill="#000"/>
<rect x="229.5" y="514.5" width="16" height="16" fill="#fff" stroke="#c8c8cc" stroke-width="1"/>
<path d="M238 518.5 L238 526.5 L234 522.5 z" fill="#000"/>
<rect x="246.5" y="514.5" width="190" height="16" fill="#fff" stroke="#c0c0c4" stroke-width="1"/>
<rect x="629.5" y="514.5" width="16" height="16" fill="#fff" stroke="#c8c8cc" stroke-width="1"/>
<path d="M636 518.5 L636 526.5 L640 522.5 z" fill="#000"/>
<rect x="227" y="533" width="438" height="1" fill="#6a6a6a"/><rect x="227" y="533" width="1" height="24" fill="#6a6a6a"/>
<rect x="302" y="538" width="13" height="1" fill="#000"/>
<rect x="302" y="540" width="13" height="1" fill="#000"/>
<rect x="302" y="542" width="13" height="1" fill="#000"/>
<rect x="302" y="544" width="13" height="1" fill="#000"/>
<rect x="302" y="546" width="13" height="1" fill="#000"/>
<rect x="302" y="548" width="13" height="1" fill="#000"/>
<rect x="302" y="550" width="13" height="1" fill="#000"/>
<rect x="302" y="552" width="13" height="1" fill="#000"/>
<rect x="331" y="538" width="17" height="1" fill="#000"/>
<rect x="331" y="540" width="17" height="1" fill="#000"/>
<rect x="331" y="542" width="17" height="1" fill="#000"/>
<rect x="331" y="544" width="17" height="1" fill="#000"/>
<rect x="331" y="546" width="17" height="1" fill="#000"/>
<rect x="331" y="548" width="17" height="1" fill="#000"/>
<rect x="331" y="550" width="17" height="1" fill="#000"/>
<rect x="331" y="552" width="17" height="1" fill="#000"/>
<rect x="355.5" y="534" width="30" height="22.5" fill="#d5e4fb" stroke="#1a3af0" stroke-width="1.2"/>
<rect x="362.5" y="536.5" width="16" height="17" fill="#fff" stroke="#1a3af0" stroke-width="1.3"/>
<rect x="365" y="539" width="11" height="1" fill="#1a3af0"/>
<rect x="365" y="541" width="11" height="1" fill="#1a3af0"/>
<rect x="365" y="543" width="11" height="1" fill="#1a3af0"/>
<rect x="365" y="545" width="11" height="1" fill="#1a3af0"/>
<rect x="365" y="547" width="11" height="1" fill="#1a3af0"/>
<rect x="365" y="549" width="11" height="1" fill="#1a3af0"/>
<rect x="365" y="551" width="11" height="1" fill="#1a3af0"/>
<rect x="396" y="545" width="12" height="2" fill="#0c1a80"/>
<rect x="415" y="545" width="138" height="1" fill="#0a0a80"/>
<rect x="482" y="538" width="4" height="15" fill="#0c1a80"/>
<rect x="561" y="544.5" width="11.5" height="2" fill="#0c1a80"/><rect x="566" y="539.5" width="2" height="11.5" fill="#0c1a80"/>
<circle cx="649" cy="545" r="7.3" fill="#fff" stroke="#000" stroke-width="1.4"/>
<path d="M649 537.7 a7.3 7.3 0 0 1 0 14.6 z" fill="#808080"/>
<circle cx="649" cy="545" r="7.3" fill="none" stroke="#000" stroke-width="1.4"/>
</svg>
</body></html>
